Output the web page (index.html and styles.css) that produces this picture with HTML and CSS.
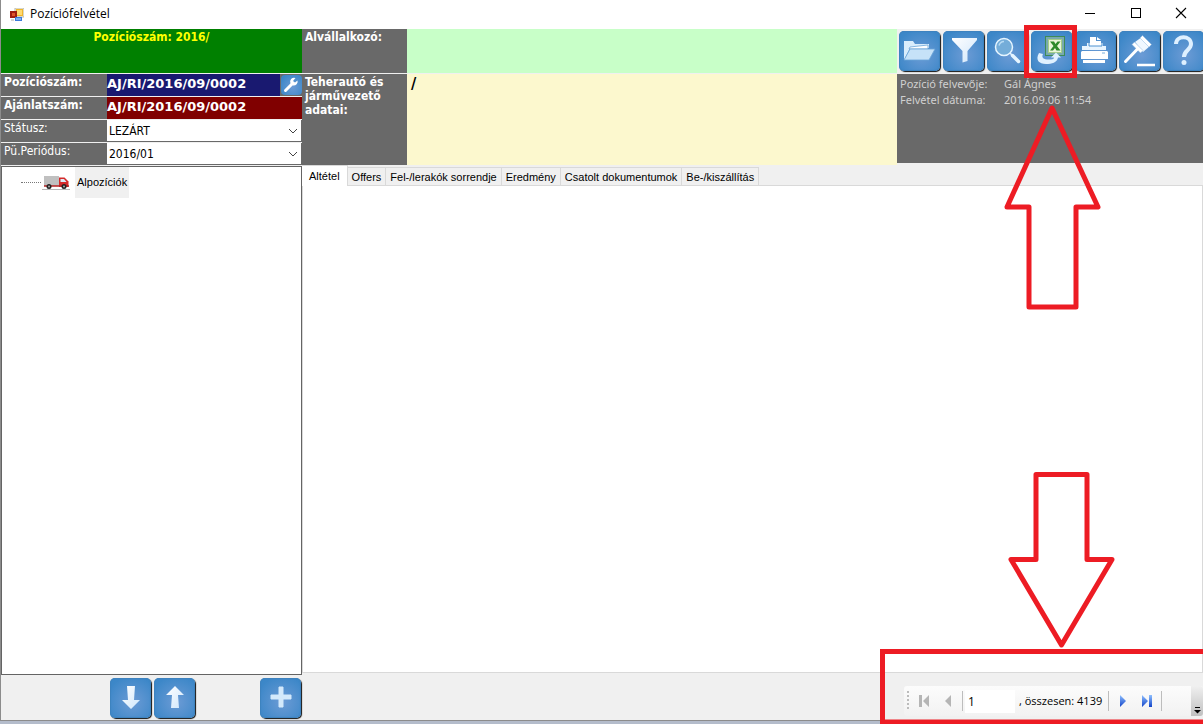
FILE: index.html
```html
<!DOCTYPE html>
<html lang="hu">
<head>
<meta charset="utf-8">
<title>Pozíciófelvétel</title>
<link rel="stylesheet" href="styles.css">
</head>
<body>
<svg class="defs" aria-hidden="true">
  <defs>
    <linearGradient id="ice" x1="0" y1="0" x2="1" y2="1"><stop offset="0" stop-color="#fff"/><stop offset="1" stop-color="#cfe6fb"/></linearGradient>
    <linearGradient id="blue" x1="0" y1="0" x2="0" y2="1"><stop offset="0" stop-color="#8fc0ff"/><stop offset="1" stop-color="#1243c8"/></linearGradient>
  </defs>
</svg>
<div class="window">
  <header class="titlebar">
    <svg class="app-icon" width="14" height="14" viewBox="0 0 14 14"><rect x="5" y="0" width="9" height="9" fill="#f5f5ee" stroke="#b9b9a8"/><rect x="6" y="1" width="7" height="7" fill="#f0b62c"/><rect x="7" y="2" width="5" height="5" fill="#ffd970"/><rect x="0" y="3" width="7" height="7" fill="#a01e10"/><rect x="2" y="5" width="3" height="3" fill="#e0532b"/><rect x="5" y="9" width="7" height="4" fill="#3c79d8"/><rect x="6" y="10" width="5" height="2" fill="#7fb0f4"/><path d="M1 12h3" stroke="#aaa"/></svg>
    <h1 class="caption">Pozíciófelvétel</h1>
    <div class="caption-buttons">
      <button class="caption-button" aria-label="Kis méret"><svg width="12" height="12" viewBox="0 0 12 12"><path d="M1 6.500h10" stroke="#000"/></svg></button>
      <button class="caption-button" aria-label="Teljes méret"><svg width="12" height="12" viewBox="0 0 12 12"><rect x="1.500" y="1.500" width="9" height="9" fill="none" stroke="#000"/></svg></button>
      <button class="caption-button" aria-label="Bezárás"><svg width="12" height="12" viewBox="0 0 12 12"><path d="M1 1l10 10M11 1L1 11" stroke="#000" stroke-width="1.100"/></svg></button>
    </div>
  </header>

  <div class="body">
    <aside class="side">
      <div class="banner">Pozíciószám: 2016/</div>
      <div class="row"><span class="label strong">Pozíciószám:</span><span class="code navy">AJ/RI/2016/09/0002</span><button class="tile mini" aria-label="Beállítás"><svg width="20" height="20" viewBox="0 0 20 20"><path d="M4.500 15.500L11 9" stroke="#fff" stroke-width="3" stroke-linecap="round"/><path d="M16.500 5.500l-2.500 2-2-1.500 2.500-3A4 4 0 0 0 9.500 8.500L12 10.500a4 4 0 0 0 4.500-5z" fill="#fff"/></svg></button></div>
      <div class="row"><span class="label strong">Ajánlatszám:</span><span class="code maroon">AJ/RI/2016/09/0002</span></div>
      <div class="row"><label class="label" for="status">Státusz:</label><span class="combo"><select id="status"><option>LEZÁRT</option></select><svg class="chevron" width="10" height="6" viewBox="0 0 10 6"><path d="M1 1l4 4 4-4" fill="none" stroke="#444"/></svg></span></div>
      <div class="row"><label class="label" for="period">Pü.Periódus:</label><span class="combo"><select id="period"><option>2016/01</option></select><svg class="chevron" width="10" height="6" viewBox="0 0 10 6"><path d="M1 1l4 4 4-4" fill="none" stroke="#444"/></svg></span></div>
      <div class="tree">
        <div class="node">
          <span class="dots"></span>
          <svg width="30" height="16" viewBox="0 0 30 16"><path d="M3 1h15v10H3z" fill="#c0c0c0"/><path d="M18 2.500h5.500l4 4V12H18z" fill="#d42a2a"/><path d="M19.500 4h3.500l2.500 3h-6z" fill="#dceaf6"/><path d="M3 11h25" stroke="#b52222" stroke-width="1.500"/><circle cx="8" cy="11.500" r="2.500" fill="#222"/><circle cx="8" cy="11.500" r="1" fill="#aaa"/><circle cx="23" cy="11.500" r="2.500" fill="#222"/><circle cx="23" cy="11.500" r="1" fill="#aaa"/><path d="M1 14.500h28" stroke="#b8b8b8"/></svg>
          <span class="node-text">Alpozíciók</span>
        </div>
      </div>
      <div class="side-actions">
        <button class="tile" aria-label="Le"><svg width="41" height="41" viewBox="0 0 41 41"><path d="M17 8h8l-1 14h6l-9 9-9-9h6z" fill="url(#ice)"/></svg></button>
        <button class="tile" aria-label="Fel"><svg width="41" height="41" viewBox="0 0 41 41"><path d="M17 30h8l-1-13h6l-9-9-9 9h6z" fill="url(#ice)"/></svg></button>
        <button class="tile last" aria-label="Új"><svg width="41" height="41" viewBox="0 0 41 41"><path d="M19 9h4v8h8v4h-8v8h-4v-8h-8v-4h8z" fill="#d3e9fb" stroke="#d3e9fb"/></svg></button>
      </div>
    </aside>

    <main class="main">
      <div class="top">
        <div class="cell-label first">Alvállalkozó:</div>
        <div class="cell mint"></div>
        <nav class="toolbar">
          <button class="tile" aria-label="Megnyitás"><svg width="41" height="41" viewBox="0 0 41 41"><path d="M5 29V10h9l2 3h14v4H11z" fill="#d9edfc"/><path d="M11 16l18-2v4H10z" fill="#fff" stroke="#5b9bd3" stroke-width=".7"/><path d="M11 18h25l-6 11H5z" fill="#c6e2f8" stroke="#6ba5d8" stroke-width=".8"/></svg></button>
          <button class="tile" aria-label="Szűrés"><svg width="41" height="41" viewBox="0 0 41 41"><path d="M9 7h25v2L24.500 20v10l-5 1.500V20L9 9z" fill="url(#ice)"/></svg></button>
          <button class="tile" aria-label="Keresés"><svg width="41" height="41" viewBox="0 0 41 41"><circle cx="17" cy="16" r="8.500" fill="#74add9" stroke="#e6f5ff" stroke-width="1.500"/><path d="M12 14.500a5.500 5.500 0 0 1 5-4" fill="none" stroke="#b7dbf4" stroke-width="1.500"/><path d="M23 22l3 3" stroke="#e6f5ff" stroke-width="1.500"/><path d="M25.500 24.500l6 6" stroke="#e6f5ff" stroke-width="3.500" stroke-linecap="round"/></svg></button>
          <button class="tile" aria-label="Exportálás Excelbe"><svg width="41" height="41" viewBox="0 0 41 41"><rect x="14.500" y="5.500" width="19" height="19" fill="#77a9ad" stroke="#3d8b55"/><rect x="17.500" y="8.500" width="13" height="13" fill="#e9f5d9" stroke="#a4cc88"/><path d="M19 10.500h4l1.500 2.500 2-2.500h3L26 15l3.500 4.500h-4L24 17l-2 2.500h-3L22.500 15z" fill="#2f8a2b"/><path d="M8 22l4 1c-2 4 1 6 8 5.500 2 0 3-1 3-2h-3l5-5 5 5h-3c-1 5-6 6.500-12 6.500-7 0-11-4-7-11z" fill="#e0f1ff"/></svg></button>
          <button class="tile" aria-label="Nyomtatás"><svg width="41" height="41" viewBox="0 0 41 41"><path d="M12 12h16v3h3v4H7v-4h5z" fill="#e9f5ff"/><path d="M15 6h6v4h5v5H15z" fill="#fff"/><path d="M22 6l4 3h-4z" fill="#fff"/><path d="M14 12v3h13v-3" fill="none" stroke="#4f92d0"/><path d="M7 20h25l1 1v7H6v-7z" fill="#fff"/><path d="M27 22h3" stroke="#7db0dd"/><path d="M8 29h22v3H8z" fill="#fff"/></svg></button>
          <button class="tile" aria-label="Elbírálás"><svg width="41" height="41" viewBox="0 0 41 41"><path d="M16 11l7-5 8 9-7 6z" fill="#f0f8ff"/><path d="M13 13.500l2.500-2.500 8.500 8.500-2.500 2.500zM21 7l2.500-2.500 9 9L30 16z" fill="#fff" stroke="#8fbbe3" stroke-width=".5"/><path d="M18.500 18L6.500 30.500" stroke="#fff" stroke-width="3" stroke-linecap="round"/><path d="M18 34h18" stroke="#fff" stroke-width="2.500"/></svg></button>
          <button class="tile" aria-label="Súgó"><svg width="41" height="41" viewBox="0 0 41 41"><path d="M13 13c0-9 15-9 15 0 0 6-7 6-7 13" fill="none" stroke="#def0ff" stroke-width="4"/><circle cx="21" cy="31.500" r="2.500" fill="#def0ff"/></svg></button>
        </nav>
        <div class="cell-label">Teherautó és járművezető adatai:</div>
        <div class="cell cream">/</div>
        <dl class="info">
          <dt>Pozíció felvevője:</dt><dd>Gál Ágnes</dd>
          <dt>Felvétel dátuma:</dt><dd>2016.09.06 11:54</dd>
        </dl>
      </div>
      <div class="tabs" role="tablist">
        <button class="tab active" role="tab" aria-selected="true">Altétel</button>
        <button class="tab" role="tab">Offers</button>
        <button class="tab" role="tab">Fel-/lerakók sorrendje</button>
        <button class="tab" role="tab">Eredmény</button>
        <button class="tab" role="tab">Csatolt dokumentumok</button>
        <button class="tab" role="tab">Be-/kiszállítás</button>
      </div>
      <section class="page" role="tabpanel"></section>
      <footer class="footer">
        <div class="navigator">
          <span class="grip"></span>
          <button class="nav" aria-label="Első"><svg width="12" height="12" viewBox="0 0 12 12"><path d="M1 0h3v12H1zM11 0v12L5 6z" fill="#b5b5b5"/></svg></button>
          <button class="nav" aria-label="Előző"><svg width="12" height="12" viewBox="0 0 12 12"><path d="M9 0v12L3 6z" fill="#b5b5b5"/></svg></button>
          <span class="sep"></span>
          <input class="position" aria-label="Pozíció" value="1">
          <span class="count">, összesen: 4139</span>
          <span class="sep"></span>
          <button class="nav" aria-label="Következő"><svg width="12" height="12" viewBox="0 0 12 12"><path d="M3 0v12l6-6z" fill="url(#blue)"/></svg></button>
          <button class="nav" aria-label="Utolsó"><svg width="12" height="12" viewBox="0 0 12 12"><path d="M1 0v12l6-6zM8 0h3v12H8z" fill="url(#blue)"/></svg></button>
          <span class="sep"></span>
          <button class="overflow" aria-label="További gombok"><svg width="7" height="7" viewBox="0 0 7 7"><path d="M1 .5h5" stroke="#000"/><path d="M0 3h7L3.500 6.500z"/></svg></button>
        </div>
      </footer>
    </main>
  </div>
</div>
<svg class="mark mark-top" width="180" height="300" viewBox="0 0 180 300"><rect x="3.500" y="7.500" width="48" height="48"/><path class="round" d="M29 88L75 187H53V287H6V187H-16z"/></svg>
<svg class="mark mark-bottom" width="323" height="256" viewBox="0 0 323 256"><path class="round" d="M156 6.500h51v85h25L181.500 177 131 91.500h25z"/><path d="M328 183.500H2.500V254H328"/></svg>
</body>
</html>
```
FILE: styles.css
```css
* { box-sizing: border-box; }
body { position: relative; margin: 0; height: 100vh; overflow: hidden; background: #b4bccb; font-family: "Liberation Sans", Arial, sans-serif; color: #000; }
button { border: 0; padding: 0; margin: 0; background: none; font: inherit; }
svg { display: block; flex: none; }
.defs { position: absolute; width: 0; height: 0; }

.window { height: calc(100vh - 3px); display: flex; flex-direction: column; overflow: hidden; background: #f0f0f0; border-left: 1px solid #8c8c8c; border-bottom: 1px solid #8c8c8c; }
.titlebar { flex: none; height: 29px; display: flex; align-items: center; padding-left: 9px; background: #fff; }
.caption { flex: 1; margin: 0 0 2px 6px; font: 400 12px/16px "Open Sans", sans-serif; }
.caption-buttons { display: flex; padding-bottom: 3px; }
.caption-button { width: 46px; height: 24px; display: grid; place-items: center; }
.caption-button:last-child { width: 44px; }

.body { flex: 1; min-height: 0; display: flex; }
.side { flex: none; width: 301px; display: flex; flex-direction: column; gap: 1px; }
.banner { height: 44px; background: #008000; color: #ff0; text-align: center; font: 700 12px/16px "DejaVu Sans Condensed", sans-serif; }
.row { height: 22px; display: flex; background: #696969; }
.label { width: 106px; padding-left: 3px; color: #fff; font: 400 12px/16px "DejaVu Sans Condensed", sans-serif; }
.strong { font-weight: 700; }
.code { flex: 1; color: #fff; font: 700 13px/20px "DejaVu Sans", sans-serif; }
.navy { background: #191970; }
.maroon { background: #800000; }
.combo { flex: 1; display: grid; align-items: center; padding-bottom: 1px; margin-right: 1px; }
.combo select { grid-area: 1 / 1; appearance: none; border: 0; border-radius: 0; width: 100%; height: 21px; padding: 0 2px; background: #fff; color: #000; font: 400 12px/20px "DejaVu Sans Condensed", sans-serif; }
.chevron { grid-area: 1 / 1; justify-self: end; margin-right: 3px; pointer-events: none; }
.tree { flex: 1; background: #fff; border: 1px solid #646464; }
.node { display: flex; align-items: center; padding-left: 19px; height: 31px; }
.dots { width: 20px; border-top: 1px dotted #777; }
.node-text { margin-left: 4px; padding: 0 2px; background: #f0f0f0; font-size: 11px; line-height: 31px; }
.side-actions { display: flex; gap: 3px; height: 44px; padding: 2px 0 0 109px; }
.side-actions .last { margin-left: auto; margin-right: 1px; }

.tile { flex: none; width: 41px; height: 40px; border-radius: 5px; background: radial-gradient(circle at 55% 60%, #6c9bd5, #3c87c8 80%); box-shadow: 1px 1px 1px #111, inset 0 0 1px 1px #3d82be; overflow: hidden; }
.mini { width: 21px; height: 20px; border-radius: 4px; box-shadow: none; margin: 1px 0 0 1px; }

.main { flex: 1; min-width: 0; display: flex; flex-direction: column; }
.top { display: grid; grid-template-columns: 105px minmax(0, 1fr) 306px; grid-template-rows: 44px 91px; row-gap: 1px; }
.cell-label { background: #696969; color: #fff; padding: 1px 3px; font: 700 12px/14px "DejaVu Sans Condensed", sans-serif; }
.mint { background: #c8ffc8; }
.cream { background: #fcf8ce; padding: 1px 4px; font: 700 16px/18px "DejaVu Sans Condensed", sans-serif; }
.toolbar { display: flex; gap: 3px; padding: 2px 0 0 2px; overflow: hidden; }
.info { margin: 0 0 2px; padding: 2px 3px; background: #696969; color: #d0d0d0; display: grid; grid-template-columns: 104px 1fr; align-content: start; font: 400 11px/16px "Noto Sans", sans-serif; }
.info dd { margin: 0; }
.tabs { flex: none; height: 21px; display: flex; align-items: flex-end; border-bottom: 1px solid #d9d9d9; }
.tab { height: 18px; padding: 0 4px; border: 1px solid #d9d9d9; border-width: 1px 1px 0 0; font: 400 11px/18px "Liberation Sans", Arial, sans-serif; white-space: nowrap; }
.active { height: 21px; margin-bottom: -1px; padding: 0 7px; background: #fff; }
.page { flex: 1; background: #fff; border: 1px solid #d9d9d9; border-top: 0; }
.footer { flex: none; height: 47px; padding-top: 13px; display: flex; justify-content: flex-end; }
.navigator { width: 299px; height: 30px; display: flex; align-items: center; background: linear-gradient(#fcfcfc, #f2f2f2); border-radius: 3px; font: 400 11px/16px "Open Sans", sans-serif; }
.grip { width: 2px; height: 20px; margin: 0 3px; background: repeating-linear-gradient(#bcbcbc 0 2px, transparent 2px 4px); }
.nav { width: 24px; height: 24px; display: grid; place-items: center; }
.sep { width: 1px; height: 20px; margin: 0 2px; background: #bdbdbd; }
.position { width: 50px; height: 23px; border: 0; padding: 0 3px; background: #fff; font: inherit; font-size: 12px; }
.count { margin: 0 4px; white-space: nowrap; }
.overflow { margin-left: auto; align-self: stretch; width: 12px; display: grid; place-items: end center; padding-bottom: 2px; background: linear-gradient(#f0f0f0, #c0c0c0); border-radius: 0 3px 3px 0; }

.mark { position: absolute; right: 0; overflow: visible; fill: none; stroke: #ed1c24; stroke-width: 5; pointer-events: none; }
.round { stroke-linejoin: round; }
.mark-top { top: 20px; }
.mark-bottom { bottom: 0; }
```
